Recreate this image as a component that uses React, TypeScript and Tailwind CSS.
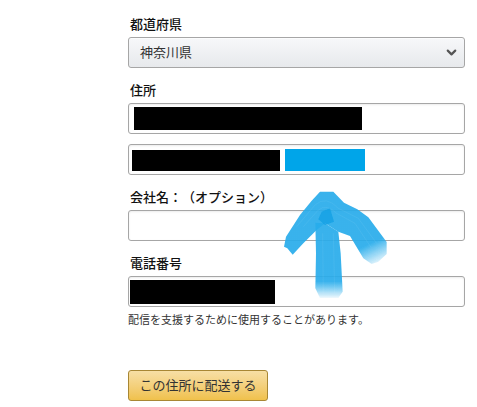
import { ChevronDown } from "lucide-react";

const FONT = "font-['Liberation_Sans','Noto_Sans_CJK_JP',sans-serif]";

function Field({ label, children }: { label: string; children: React.ReactNode }) {
  return (
    <div className="mt-[15px] first:mt-0">
      <label className="block h-5 pl-[2px] text-[13px] leading-[16px] font-medium text-[#111] [text-spacing-trim:space-all]">{label}</label>
      {children}
    </div>
  );
}

function Input({ children }: { children?: React.ReactNode }) {
  return (
    <div className="flex h-[31px] items-center rounded-[3px] border border-[#a6a6a6] bg-white shadow-[inset_0_1px_2px_rgba(15,17,17,0.08)]">
      {children}
    </div>
  );
}

// hand painted arrow on top of the form
function PaintedArrow() {
  return (
    <svg className="pointer-events-none absolute left-[270px] top-[180px]" width="130" height="125" viewBox="0 0 390 375">
      <defs>
        <linearGradient id="shaft" x1="0" y1="0" x2="0" y2="1">
          <stop offset="0.78" stopColor="#27aceb" stopOpacity="0.92" />
          <stop offset="1" stopColor="#27aceb" stopOpacity="0.08" />
        </linearGradient>
        <linearGradient id="chevron" gradientUnits="userSpaceOnUse" x1="295" y1="175" x2="330" y2="250">
          <stop offset="0.2" stopColor="#27aceb" stopOpacity="0.92" />
          <stop offset="1" stopColor="#27aceb" stopOpacity="0.08" />
        </linearGradient>
        <filter id="soft" x="-5%" y="-5%" width="110%" height="110%">
          <feGaussianBlur stdDeviation="1.6" />
        </filter>
      </defs>
      <g filter="url(#soft)">
        <path d="M136 128L165 130L205 155L212 220L218 335L205 354L150 354L136 325L138 220Z" fill="url(#shaft)" />
        <path
          d="M150 35L190 35L222 68L262 88L295 112L350 186L350 222L325 245L305 252L280 235L240 168L205 155L165 130L140 150L100 190L68 224L52 205L42 200L48 170L90 105L125 62Z"
          fill="url(#chevron)"
        />
        <path d="M155 95L180 85L192 125L165 135L145 118Z" fill="#0f9fe4" fillOpacity="0.75" />
      </g>
      <g fill="none" stroke="#fff" strokeOpacity="0.06" strokeWidth="3">
        <path d="M80 140L135 75Q168 45 205 85L265 115L320 190" />
        <path d="M100 140L145 90Q170 70 200 100L255 130L305 205" />
        <path d="M158 160L160 340" />
        <path d="M190 160L194 340" />
      </g>
    </svg>
  );
}

export default function App() {
  return (
    <div className={`relative h-[407px] w-full overflow-hidden bg-white ${FONT}`}>
      <div className="ml-[128px] w-[337px] pt-[17px]">
        <Field label="都道府県">
          <div className="flex h-[31px] items-center justify-between rounded-[3px] border border-[#a6a6a6] bg-gradient-to-b from-[#f7f8fa] to-[#e7e9ec] pl-[11px] pr-[5px] shadow-[0_1px_0_rgba(255,255,255,0.6)_inset]">
            <span className="text-[13px] text-[#333]">神奈川県</span>
            <ChevronDown className="size-[15px] text-[#555]" strokeWidth={3.5} />
          </div>
        </Field>

        <Field label="住所">
          <Input>
            <div className="ml-[5px] h-[23px] w-[228px] bg-black" />
          </Input>
          <div className="mt-[10px]">
            <Input>
              <div className="ml-[3px] mt-[1px] h-[21px] w-[148px] bg-black" />
              <div className="ml-[5px] h-[22px] w-[80px] bg-[#00a5e9]" />
            </Input>
          </div>
        </Field>

        <Field label="会社名：（オプション）">
          <Input />
        </Field>

        <Field label="電話番号">
          <Input>
            <div className="ml-px h-6 w-[145px] bg-black" />
          </Input>
        </Field>

        <p className="mt-[6px] text-[11px] leading-[14px] text-[#333]">配信を支援するために使用することがあります。</p>

        <button
          type="button"
          className="mt-[43px] block h-[31px] w-[140px] rounded-[3px] border border-[#a88734] bg-gradient-to-b from-[#f7dfa5] to-[#f0c14b] text-[13px] text-[#333]"
        >
          この住所に配送する
        </button>
      </div>
      <PaintedArrow />
    </div>
  );
}
